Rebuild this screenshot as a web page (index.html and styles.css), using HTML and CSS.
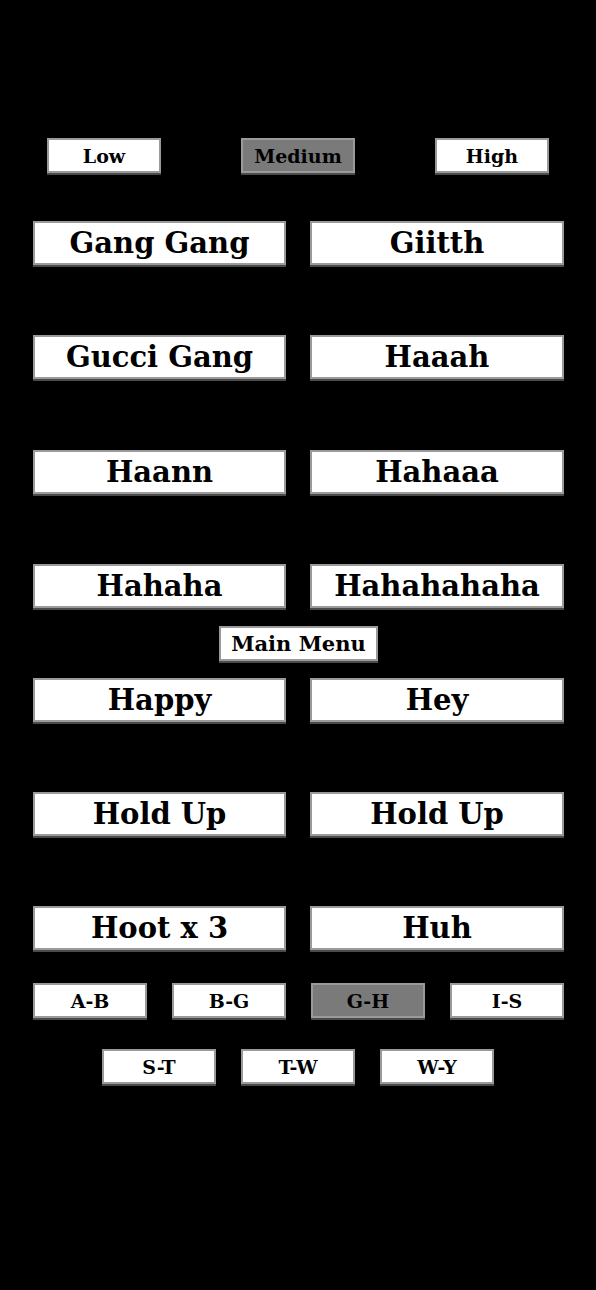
FILE: index.html
```html
<!DOCTYPE html>
<html>
<head>
<meta charset="utf-8">
<link rel="stylesheet" href="styles.css">
</head>
<body>
<div class="page">
  <div class="levels">
    <div class="btn small">Low</div>
    <div class="btn small active">Medium</div>
    <div class="btn small">High</div>
  </div>
  <div class="sounds">
    <div class="pair"><div class="btn big">Gang Gang</div><div class="btn big">Giitth</div></div>
    <div class="pair"><div class="btn big">Gucci Gang</div><div class="btn big">Haaah</div></div>
    <div class="pair"><div class="btn big">Haann</div><div class="btn big">Hahaaa</div></div>
    <div class="pair"><div class="btn big">Hahaha</div><div class="btn big">Hahahahaha</div></div>
    <div class="menu-row"><div class="btn menu">Main Menu</div></div>
    <div class="pair"><div class="btn big">Happy</div><div class="btn big">Hey</div></div>
    <div class="pair"><div class="btn big">Hold Up</div><div class="btn big">Hold Up</div></div>
    <div class="pair"><div class="btn big">Hoot x 3</div><div class="btn big">Huh</div></div>
  </div>
  <div class="letters">
    <div class="btn small">A-B</div>
    <div class="btn small">B-G</div>
    <div class="btn small active">G-H</div>
    <div class="btn small">I-S</div>
  </div>
  <div class="letters second">
    <div class="btn small">S-T</div>
    <div class="btn small">T-W</div>
    <div class="btn small">W-Y</div>
  </div>
</div>
</body>
</html>
```
FILE: styles.css
```css
html, body {
  margin: 0;
  padding: 0;
  background: #000;
}
body {
  width: 596px;
  height: 1290px;
  overflow: hidden;
  font-family: "DejaVu Serif", "Liberation Serif", serif;
  font-weight: bold;
  color: #000;
}
.page {
  padding-top: 138px;
}
.btn {
  box-sizing: border-box;
  background: #fff;
  border: 2px solid #9a9a9a;
  box-shadow: 0 2px 0 #4a4a4a;
  display: flex;
  align-items: center;
  justify-content: center;
  white-space: nowrap;
}
.btn.active {
  background: #7a7a7a;
}
.small {
  width: 114px;
  height: 35px;
  font-size: 19px;
}
.levels {
  display: flex;
  gap: 80px;
  padding-left: 47px;
}
.sounds {
  margin-top: 48px;
  display: flex;
  flex-direction: column;
  gap: 70.3px;
  padding: 0 32px 0 33px;
}
.pair {
  display: grid;
  grid-template-columns: 253px 254px;
  gap: 24px;
}
.big {
  height: 44px;
  font-size: 29px;
}
.menu-row {
  display: flex;
  justify-content: center;
  margin: -52.3px 0 -53.3px;
}
.menu {
  width: 159px;
  height: 35px;
  font-size: 21px;
}
.letters {
  margin-top: 33px;
  display: flex;
  gap: 25px;
  padding-left: 33px;
}
.letters.second {
  margin-top: 31px;
  padding-left: 102px;
}
```
